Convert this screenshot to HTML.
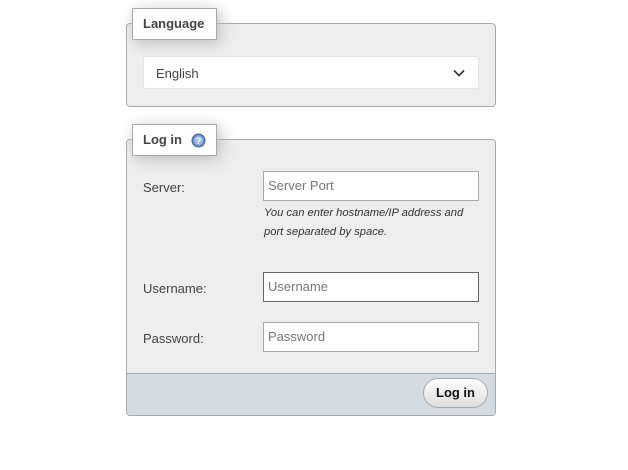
<!DOCTYPE html>
<html><head><style>
body{margin:0;width:628px;height:470px;background:#fff;font-family:"Liberation Sans",sans-serif;font-size:13px;color:#444;position:relative;overflow:hidden}
.a{position:absolute}
.fs{background:#eee;border:1px solid #aaa;border-radius:4px;box-sizing:border-box}
.lg{background:#fff;border:1px solid #aaa;box-shadow:3px 3px 15px #bbb;font-weight:bold;color:#444;box-sizing:border-box;padding:7px 10px;font-size:13px}
.in{background:#fff;border:1px solid #aaa;box-sizing:border-box;color:#777;padding:6px 4px;font-size:13px}
</style></head><body>
<div class="a fs" style="left:126px;top:23px;width:370px;height:84px"></div>
<div class="a lg" style="left:132px;top:8px;width:85px;height:32px">Language</div>
<div class="a" style="left:143px;top:56px;width:336px;height:33px;background:#fff;border:1px solid #e4e4e4;border-radius:3px;box-sizing:border-box;padding:9px 12px;color:#444">English
<svg class="a" style="left:309px;top:12px" width="12" height="8" viewBox="0 0 12 8"><path d="M1 1.5l5 5 5-5" fill="none" stroke="#333" stroke-width="1.6"/></svg></div>

<div class="a fs" style="left:126px;top:139px;width:370px;height:277px;overflow:hidden">
<div class="a" style="left:0;top:233px;width:370px;height:44px;background:#d3dce3;border-top:1px solid #aaa"></div>
</div>
<div class="a lg" style="left:132px;top:124px;width:85px;height:32px">Log in
<svg class="a" style="left:58px;top:8px" width="15" height="15" viewBox="0 0 15 15"><circle cx="7.5" cy="7.5" r="6.5" fill="#6b93c9" stroke="#3c66a8"/><circle cx="7.5" cy="7.5" r="4.5" fill="#9bbbe6"/><text x="7.5" y="11" font-size="9" font-weight="bold" fill="#fff" text-anchor="middle" font-family="Liberation Sans">?</text></svg></div>

<div class="a" style="left:143px;top:180px">Server:</div>
<div class="a in" style="left:263px;top:171px;width:216px;height:30px">Server Port</div>
<div class="a" style="left:264px;top:204px;font-size:11.2px;font-style:italic;line-height:19px;color:#333">You can enter hostname/IP address and<br>port separated by space.</div>
<div class="a" style="left:143px;top:281px">Username:</div>
<div class="a in" style="left:263px;top:272px;width:216px;height:30px;border-color:#666">Username</div>
<div class="a" style="left:143px;top:331px">Password:</div>
<div class="a in" style="left:263px;top:322px;width:216px;height:30px">Password</div>
<div class="a" style="left:423px;top:378px;width:65px;height:30px;border:1px solid #aaa;border-radius:15px;background:linear-gradient(#fff,#ddd);box-sizing:border-box;font-weight:bold;color:#111;text-align:center;line-height:28px">Log in</div>
</body></html>
